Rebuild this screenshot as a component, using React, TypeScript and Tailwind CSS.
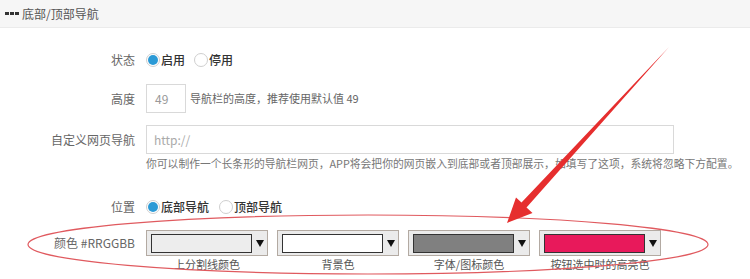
import React from 'react';

const font = "font-['Noto_Sans_CJK_SC','Noto_Sans',sans-serif]";

function Radio({ checked, label }: { checked?: boolean; label: string }) {
  return (
    <label className="flex items-center gap-[1px]">
      <span className="w-[14px] h-[14px] rounded-full border border-[#cfcfcf] bg-white flex items-center justify-center">
        {checked && <span className="w-[10px] h-[10px] rounded-full bg-[#2b9ad6]" />}
      </span>
      <span className="text-[12px] text-[#333] font-medium">{label}</span>
    </label>
  );
}

function Row({ label, children, className = '' }: { label: string; children: React.ReactNode; className?: string }) {
  return (
    <div className={`flex items-center ${className}`}>
      <div className="w-[135px] text-right text-[12px] text-[#666] shrink-0">{label}</div>
      <div className="ml-[11px] flex items-center">{children}</div>
    </div>
  );
}

const pickers = [
  { color: 'bg-[#ededed]', label: '上分割线颜色' },
  { color: 'bg-white', label: '背景色' },
  { color: 'bg-[#808080]', label: '字体/图标颜色' },
  { color: 'bg-[#e8195b]', label: '按钮选中时的高亮色' },
];

function ColorPicker({ color }: { color: string }) {
  return (
    <div className="w-[122px] h-[26px] border border-[#b3aaa2] bg-[#ebebeb] flex items-center pl-[4px]">
      <div className={`w-[101px] h-[19px] border border-[#333] ${color}`} />
      <div className="flex-1 flex justify-center">
        <svg width="8" height="7" viewBox="0 0 8 7">
          <path d="M0 0 H8 L4 7 Z" fill="#111" />
        </svg>
      </div>
    </div>
  );
}

export default function App() {
  return (
    <div className={`relative w-[750px] h-[279px] bg-white overflow-hidden ${font}`}>
      <div className="h-[28px] bg-[#f6f6f6] border-b border-[#ebebeb] flex items-center pl-[5px] gap-[3px]">
        <div className="flex gap-[1px]">
          <span className="w-[4px] h-[3px] bg-[#333]" />
          <span className="w-[4px] h-[3px] bg-[#333]" />
          <span className="w-[4px] h-[3px] bg-[#333]" />
        </div>
        <span className="text-[12px] text-[#555]">底部/顶部导航</span>
      </div>

      <Row label="状态" className="mt-[22px] h-[20px]">
        <div className="flex items-center gap-[9px]">
          <Radio checked label="启用" />
          <Radio label="停用" />
        </div>
      </Row>

      <Row label="高度" className="mt-[14px] h-[29px]">
        <div className="w-[40px] h-[29px] border border-[#d9d9d9] flex items-center pl-[8px] text-[12px] text-[#999]">49</div>
        <span className="ml-[4px] text-[11px] text-[#666]">导航栏的高度，推荐使用默认值 49</span>
      </Row>

      <Row label="自定义网页导航" className="mt-[12px] h-[29px]">
        <div className="w-[528px] h-[29px] border border-[#d9d9d9] flex items-center pl-[7px] text-[12px] text-[#aaa]">http://</div>
      </Row>
      <div className="ml-[146px] mt-[1px] h-[16px] leading-[16px] text-[10.8px] text-[#777] whitespace-nowrap">
        你可以制作一个长条形的导航栏网页，APP将会把你的网页嵌入到底部或者顶部展示，如填写了这项，系统将忽略下方配置。
      </div>

      <Row label="位置" className="mt-[26px] h-[20px]">
        <div className="flex items-center gap-[10px]">
          <Radio checked label="底部导航" />
          <Radio label="顶部导航" />
        </div>
      </Row>

      <Row label="颜色 #RRGGBB" className="mt-[13px] h-[26px]">
        <div className="flex gap-[9px]">
          {pickers.map((p) => (
            <ColorPicker key={p.label} color={p.color} />
          ))}
        </div>
      </Row>
      <div className="ml-[146px] mt-[1px] flex gap-[9px]">
        {pickers.map((p) => (
          <div key={p.label} className="w-[122px] text-center text-[11px] leading-[14px] text-[#555]">
            {p.label}
          </div>
        ))}
      </div>

      {/* annotation: ellipse + arrow */}
      <svg className="absolute inset-0 pointer-events-none" width="750" height="279" viewBox="0 0 750 279">
        <ellipse cx="368" cy="244.5" rx="340" ry="29.5" fill="none" stroke="#e05a5f" strokeWidth="1.2" />
        <polygon
          points="669,47 526.5,207.5 532.5,213 507,223 516,197.5 521.5,202.5"
          fill="#e62e2e"
        />
      </svg>
    </div>
  );
}
